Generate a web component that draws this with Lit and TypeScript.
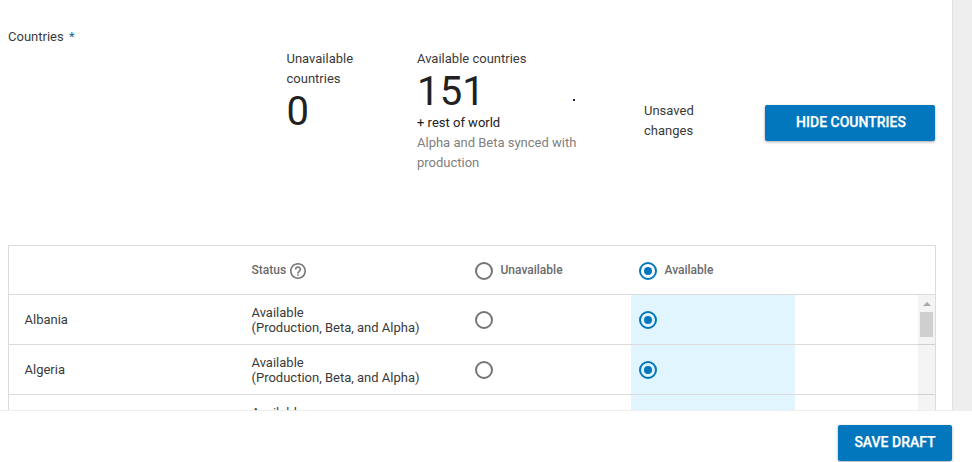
import { LitElement, html, css } from "lit";
import { customElement, property } from "lit/decorators.js";
import { classMap } from "lit/directives/class-map.js";

@customElement("radio-dot")
class RadioDot extends LitElement {
  @property({ type: Boolean }) checked = false;
  static styles = css`
    :host { display: block; width: 18px; height: 18px; flex: none; }
    .ring {
      box-sizing: border-box; width: 18px; height: 18px; border: 2px solid #757575;
      border-radius: 50%; display: flex; align-items: center; justify-content: center;
    }
    .ring.on { border-color: #0277bd; }
    .on::after { content: ""; width: 8px; height: 8px; border-radius: 50%; background: #0277bd; }
  `;
  render() {
    return html`<div class=${classMap({ ring: true, on: this.checked })}></div>`;
  }
}

@customElement("app-root")
class AppRoot extends LitElement {
  static styles = css`
    :host {
      display: flex; flex-direction: column; width: 972px; height: 462px; overflow: hidden;
      background: #fff; color: #3a3a3a; font: 13px/20px Roboto, sans-serif;
    }
    * { box-sizing: border-box; }
    .main { display: flex; height: 410px; overflow: hidden; background: #eee; }
    .panel { width: 953px; height: 410px; background: #fff; border-right: 1px solid #e2e2e2; padding-left: 8px; }
    .title { height: 49px; padding-top: 27px; }
    .star { color: #0f6aa0; margin-left: 2px; }
    .summary { display: grid; grid-template-columns: 278.500px 130.500px 227px 121px 170px; height: 196px; }
    .c1 { grid-column: 2; width: 80px; }
    .c2 { width: 175px; position: relative; }
    .num { font-size: 40px; line-height: 44px; height: 44px; padding-top: 1px; color: #212121; }
    .c2 .num { letter-spacing: 0.2px; }
    .dark { color: #212121; }
    .muted { color: #808080; }
    .speck { position: absolute; left: 156px; top: 50px; width: 2px; height: 2px; background: #224; }
    .c3 { padding: 52px 50px 0 0; }
    .btn {
      height: 36px; border-radius: 2px; background: #0277bd; color: #fff; font-weight: 500;
      font-size: 14px; line-height: 34px; text-align: center; -webkit-text-stroke: 0.250px #fff;
      box-shadow: 0 1px 3px rgba(0, 0, 0, 0.35);
    }
    .hide { margin-top: 56px; padding-left: 2px; }
    .table { width: 928px; border: 1px solid #dcdcdc; border-bottom: 0; height: 170px; }
    .head, .row { display: grid; grid-template-columns: 242px 224px 156px 164px 1fr; border-bottom: 1px solid #dcdcdc; }
    .head { height: 49px; align-items: center; color: #6a6a6a; font-weight: 500; font-size: 12px; }
    .cell { display: flex; align-items: center; gap: 7.500px; padding-top: 2px; }
    .cell span { margin-top: -3px; }
    .status { grid-column: 2; gap: 4px; padding-left: 0.500px; }
    .radio2 { padding-left: 8px; }
    .body { display: flex; }
    .rows { flex: 1; margin-right: -17px; }
    .row { height: 50px; border-color: rgba(0, 0, 0, 0.14); }
    .name { padding: 15px 0 0 15.500px; }
    .state { line-height: 15px; padding: 10px 0 0 0.500px; white-space: nowrap; }
    .un { padding-top: 16px; }
    .sel { background: #e1f5fe; padding: 16px 0 0 8px; }
    .bar { width: 17px; height: 116px; padding: 7px 2px 0 2px; background: rgba(0, 0, 0, 0.045); display: flex; flex-direction: column; align-items: center; }
    .arrow { width: 0; height: 0; border: 4px solid transparent; border-top: 0; border-bottom-color: #a8a8a8; }
    .thumb { width: 13px; height: 25px; margin-top: 6px; background: #cfcfcf; }
    .footer { height: 52px; border-top: 1px solid #eee; padding: 14px 20px 0 0; display: flex; justify-content: flex-end; }
    .save { width: 114px; }
  `;

  private countries = [
    { name: "Albania", tracks: "(Production, Beta, and Alpha)" },
    { name: "Algeria", tracks: "(Production, Beta, and Alpha)" },
    { name: "", tracks: "" },
  ];

  render() {
    return html`
      <div class="main">
        <div class="panel">
          <div class="title">Countries <span class="star">*</span></div>
          <div class="summary">
            <div class="c1">Unavailable countries<div class="num">0</div></div>
            <div class="c2">
              Available countries
              <div class="num">151</div>
              <div class="dark">+ rest of world</div>
              <div class="muted">Alpha and Beta synced with production</div>
              <i class="speck"></i>
            </div>
            <div class="c3">Unsaved changes</div>
            <div class="btn hide">HIDE COUNTRIES</div>
          </div>
          <div class="table">
            <div class="head">
              <div class="cell status"><span>Status</span>
                <svg width="16" height="16" viewBox="2 2 20 20" fill="#757575">
                  <path d="M11 18h2v-2h-2v2zm1-16C6.48 2 2 6.48 2 12s4.480 10 10 10 10-4.480 10-10S17.520 2 12 2zm0 18c-4.410 0-8-3.590-8-8s3.590-8 8-8 8 3.590 8 8-3.590 8-8 8zm0-14c-2.210 0-4 1.790-4 4h2c0-1.100.9-2 2-2s2 .9 2 2c0 2-3 1.750-3 5h2c0-2.250 3-2.500 3-5 0-2.210-1.790-4-4-4z"/>
                </svg>
              </div>
              <div class="cell"><radio-dot></radio-dot><span>Unavailable</span></div>
              <div class="cell radio2"><radio-dot checked></radio-dot><span>Available</span></div>
            </div>
            <div class="body">
              <div class="rows">
                ${this.countries.map((c) => html`
                  <div class="row">
                    <div class="name">${c.name}</div>
                    <div class="state">Available<br />${c.tracks}</div>
                    <div class="un"><radio-dot></radio-dot></div>
                    <div class="sel"><radio-dot checked></radio-dot></div>
                  </div>`)}
              </div>
              <div class="bar"><div class="arrow"></div><div class="thumb"></div></div>
            </div>
          </div>
        </div>
      </div>
      <div class="footer"><div class="btn save">SAVE DRAFT</div></div>
    `;
  }
}
